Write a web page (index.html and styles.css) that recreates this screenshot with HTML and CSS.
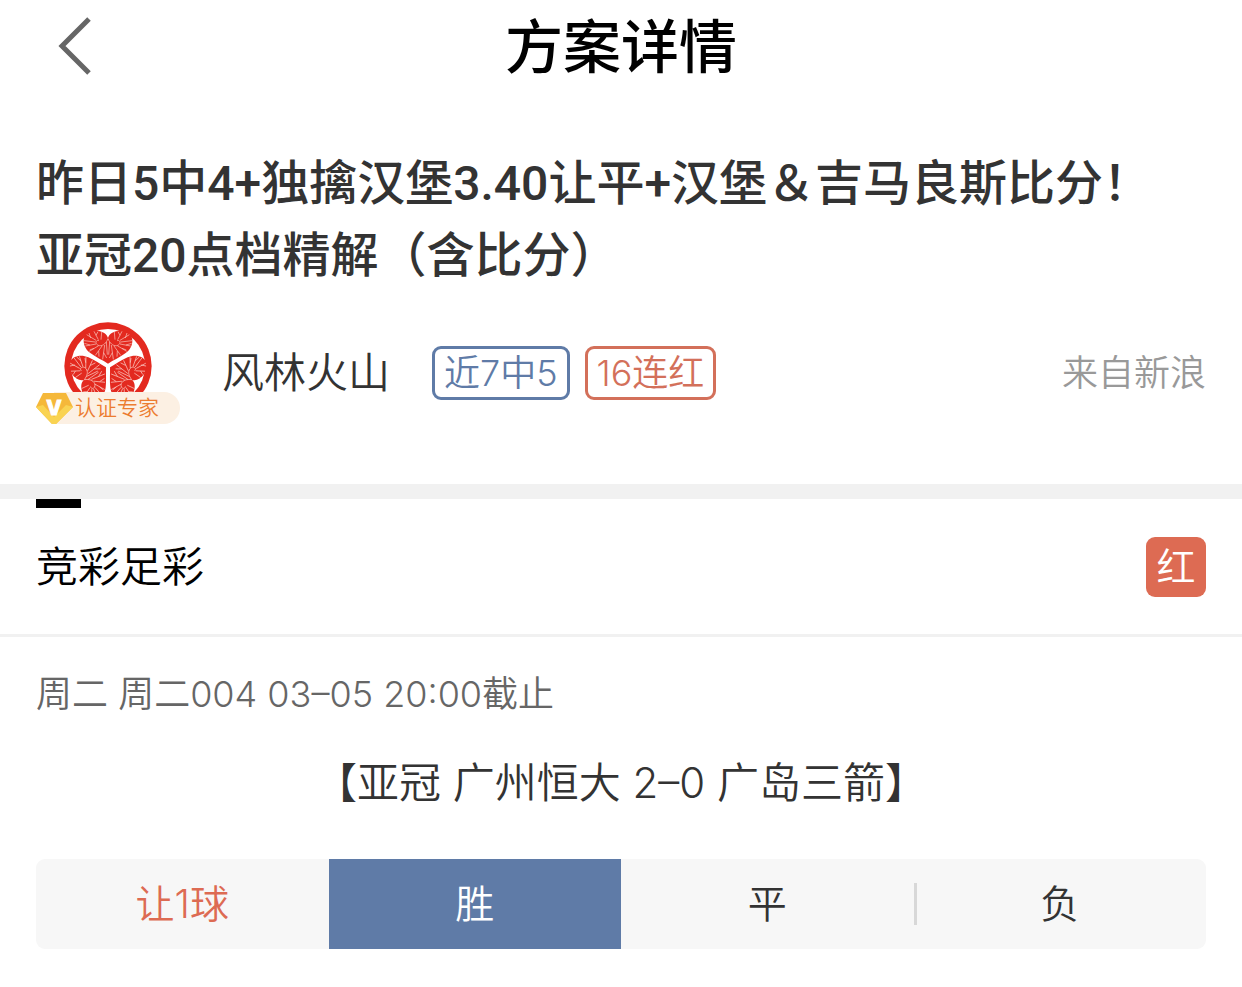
FILE: index.html
```html
<!DOCTYPE html>
<html lang="zh-CN">
<head>
    <meta charset="UTF-8">
    <meta name="viewport" content="width=device-width, initial-scale=1.0">
    <title>方案详情</title>
    <link rel="stylesheet" href="styles.css">
</head>
<body>

    <header class="nav">
        <a class="back" href="#" aria-label="返回">
            <svg width="36" height="60" viewBox="0 0 36 60" fill="none" stroke="#666" stroke-width="5">
                <path d="M33 2 L6 29 L33 56"/>
            </svg>
        </a>
        <h1>方案详情</h1>
    </header>

    <section class="plan">
        <h2>昨日5中4+独擒汉堡3.40让平+汉堡＆吉马良斯比分！<br>亚冠20点档精解（含比分）</h2>
        <div class="author">
            <div class="avatar">
                <svg class="crest" width="88" height="88" viewBox="-132 -132 264 264" aria-hidden="true">
                    <defs>
                        <g id="half">
                            <path d="M0 -82 C-6 -68 -14 -60 -26 -61 C-40 -64 -38 -80 -27 -76"/>
                            <path d="M-5 -72 L-2 -34 M-10 -63 L-16 -20 M-18 -60 L-38 -32 M-28 -61 L-56 -44 M-36 -66 L-68 -60"/>
                            <path d="M-38 -72 L-72 -76 M-36 -77 L-64 -94 M-29 -79 L-42 -104 M-21 -79 L-19 -102"/>
                            <path d="M-13 -40 L-4 -24 M-28 -45 L-27 -28 M-42 -53 L-55 -48 M-54 -63 L-71 -68 M-52 -84 L-57 -99 M-36 -92 L-30 -103"/>
                        </g>
                        <g id="leaf">
                            <path fill="#e3291f" d="M0 -7 C-16 -17 -36 -26 -52 -38 C-66 -48 -73 -62 -73 -76 C-72 -96 -56 -108 -34 -106 C-16 -105 -3 -96 0 -84 C3 -96 16 -105 34 -106 C56 -108 72 -96 73 -76 C73 -62 66 -48 52 -38 C36 -26 16 -17 0 -7 Z"/>
                            <g fill="none" stroke="#fbcac3" stroke-width="2">
                                <use href="#half"/>
                                <use href="#half" transform="scale(-1 1)"/>
                            </g>
                        </g>
                    </defs>
                    <circle r="131" fill="#e3291f"/>
                    <circle r="111" fill="#fff"/>
                    <use href="#leaf"/>
                    <use href="#leaf" transform="rotate(120)"/>
                    <use href="#leaf" transform="rotate(240)"/>
                </svg>
                <div class="badge">
                    <svg width="37" height="32" viewBox="0 0 37 32" aria-hidden="true">
                        <path fill="#f5b83a" d="M7 1 H30 L37 15 L20 32 H16 L0 15 Z"/>
                        <path fill="#f9d352" d="M0 15 L7 13 L18 25 L30 13 L37 15 L20 32 H16 Z"/>
                        <text class="badge-v" x="18" y="23" text-anchor="middle">V</text>
                    </svg>
                    <span>认证专家</span>
                </div>
            </div>
            <span class="name">风林火山</span>
            <div class="tags">
                <span class="tag blue">近7中5</span>
                <span class="tag red">16连红</span>
            </div>
            <span class="source">来自新浪</span>
        </div>
    </section>

    <section class="match">
        <div class="match-head">
            <h3>竞彩足彩</h3>
            <span class="result">红</span>
        </div>
        <div class="match-body">
            <p class="deadline">周二 周二004 03–05 20:00截止</p>
            <p class="teams">【亚冠 广州恒大 2–0 广岛三箭】</p>
            <div class="options">
                <span class="handicap">让1球</span>
                <button type="button" class="selected">胜</button>
                <button type="button">平</button>
                <button type="button" class="divided">负</button>
            </div>
        </div>
    </section>

</body>
</html>
```
FILE: styles.css
```css
* {
    box-sizing: border-box;
}

body {
    margin: 0;
    background-color: #fff;
    color: #333;
    font-family: Inter, "Noto Sans CJK SC", sans-serif;
    font-weight: 350;
}

h1, h2, h3, p {
    margin: 0;
}

/* top bar */
.nav {
    display: grid;
    grid-template-columns: 1fr auto 1fr;
    align-items: center;
    height: 92px;
    padding: 0 56px;
}

.nav h1 {
    color: #000;
    font-size: 58px;
    font-weight: 500;
    line-height: 94px;
}

.back {
    display: flex;
}

/* title and author */
.plan {
    padding: 56px 36px 60px;
    border-bottom: 15px solid #f1f1f1;
}

.plan h2 {
    font-family: Roboto, "Noto Sans CJK SC", sans-serif;
    font-size: 48px;
    font-weight: 500;
    line-height: 72px;
}

.author {
    display: flex;
    align-items: center;
    margin-top: 30px;
}

.avatar {
    position: relative;
    width: 144px;
    height: 102px;
}

.crest {
    display: block;
    margin: 0 auto;
}

.badge {
    position: absolute;
    left: 18px;
    right: 0;
    bottom: 0;
    display: flex;
    align-items: center;
    height: 32px;
    border-radius: 0 16px 16px 0;
    background-color: #fcf0e3;
    color: #ec7c30;
    font-size: 21px;
    line-height: 30px;
}

.badge svg {
    margin-left: -18px;
}

.badge span {
    margin-left: 2px;
}

.badge-v {
    fill: #fff;
    stroke: #fff;
    stroke-width: 1px;
    font-size: 20px;
    font-weight: 800;
}

.name {
    margin-left: 42px;
    font-size: 42px;
    line-height: 60px;
}

.tags {
    display: flex;
    gap: 15px;
    margin-left: 42px;
}

.tag {
    padding: 0 9px;
    border: 3px solid;
    border-radius: 9px;
    font-size: 36px;
    line-height: 48px;
}

.blue {
    color: #5f7ba7;
}

.red {
    color: #d3705a;
}

.source {
    margin-left: auto;
    color: #999;
    font-size: 36px;
    line-height: 54px;
}

/* match */
.match-head {
    display: flex;
    align-items: center;
    justify-content: space-between;
    height: 138px;
    padding: 0 36px;
    border-bottom: 3px solid #f1f1f1;
    background: linear-gradient(#000, #000) 36px 0 / 45px 9px no-repeat;
}

.match-head h3 {
    color: #000;
    font-size: 42px;
    font-weight: 350;
    line-height: 60px;
}

.result {
    width: 60px;
    border-radius: 9px;
    background-color: #dd6b53;
    color: #fff;
    font-size: 39px;
    line-height: 60px;
    text-align: center;
}

.match-body {
    padding: 30px 36px;
}

.deadline {
    color: #666;
    font-size: 36px;
    line-height: 54px;
}

.teams {
    margin: 32px 0 46px;
    font-size: 42px;
    line-height: 60px;
    text-align: center;
}

.options {
    display: grid;
    grid-template-columns: repeat(4, 1fr);
    height: 90px;
    border-radius: 9px;
    overflow: hidden;
    background-color: #f7f7f7;
    font-size: 39px;
    line-height: 90px;
    text-align: center;
}

.options button {
    padding: 0;
    border: none;
    background: none;
    color: #333;
    font: inherit;
    cursor: pointer;
}

.options .handicap {
    color: #dd6b53;
}

.options .selected {
    background-color: #5f7ba7;
    color: #fff;
}

.options .divided {
    background: linear-gradient(#d8d8d8, #d8d8d8) 0 center / 3px 42px no-repeat;
}
```
